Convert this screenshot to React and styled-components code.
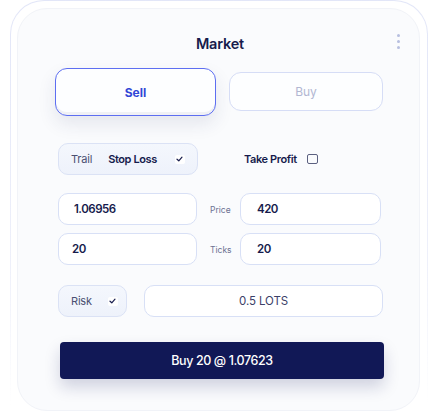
import React from 'react';
import styled, { createGlobalStyle, css } from 'styled-components';

const GlobalStyle = createGlobalStyle`
    html, body {
        margin: 0;
        padding: 0;
        background: #ffffff;
        font-family: Inter, "Open Sans", sans-serif;
        -webkit-font-smoothing: antialiased;
    }
`;

const navy = '#161b4c';

const Frame = styled.div`
    width: 418px;
    height: 440px;
    margin-left: 10px;
    box-sizing: border-box;
    padding: 7px 7px 0 6px;
    border-radius: 34px;
    border: 1px solid transparent;
    background:
        linear-gradient(#ffffff, #ffffff) padding-box,
        linear-gradient(180deg, #e2e6f8 0%, #eef0fa 60%, rgba(255,255,255,0) 92%) border-box;
`;

const Panel = styled.div`
    width: 403px;
    height: 403px;
    box-sizing: border-box;
    border-radius: 30px;
    background: #fafbfd;
    border: 1px solid #f1f3f8;
    padding: 25px 0 0;
`;

const Header = styled.header`
    display: grid;
    grid-template-columns: 1fr auto 1fr;
    align-items: center;
    height: 18px;
    padding-left: 3px;
`;

const Title = styled.h1`
    grid-column: 2;
    margin: 0;
    font-size: 14.5px;
    font-weight: 600;
    color: ${navy};
    letter-spacing: -0.2px;
`;

const Kebab = styled.div`
    grid-column: 3;
    justify-self: end;
    display: flex;
    flex-direction: column;
    gap: 3px;
    margin: -4px 19px 0 0;
    span {
        width: 3px;
        height: 3px;
        border-radius: 50%;
        background: #b7bfe0;
    }
`;

const Body = styled.div`
    padding: 0 36px 0 40px;
`;

const SideRow = styled.div`
    display: flex;
    align-items: center;
    gap: 13px;
    margin-top: 16px;
    margin-left: -3px;
`;

const SideButton = styled.button`
    font-family: inherit;
    font-size: 12px;
    border-radius: 12px;
    background: #fdfeff;
    cursor: pointer;
    ${props => props.active ? css`
        width: 161px;
        height: 48px;
        border: 1.5px solid #5d6ef1;
        color: #3347d6;
        font-weight: 700;
        box-shadow: 0 8px 18px rgba(40, 50, 100, 0.10), inset 0 -3px 0 rgba(30, 40, 90, 0.06);
    ` : css`
        width: 154px;
        height: 39px;
        margin-top: -2px;
        border: 1px solid #d6ddf6;
        color: #b2b7d2;
        font-weight: 400;
    `}
`;

const ToggleRow = styled.div`
    display: flex;
    align-items: center;
    gap: 46px;
    margin-top: 27px;
`;

const Pill = styled.div`
    display: flex;
    align-items: center;
    height: 32px;
    box-sizing: border-box;
    padding: 0 0 0 12px;
    width: ${props => props.width}px;
    border-radius: 10px;
    border: 1px solid #dbe2f5;
    background: linear-gradient(180deg, #f4f7fd 0%, #eef2fb 100%);
    font-size: 11px;
    letter-spacing: -0.2px;
    color: #4b5072;
`;

const Strong = styled.span`
    font-weight: 600;
    color: ${navy};
    letter-spacing: -0.4px;
    margin-left: ${props => props.gap || 0}px;
`;

const Check = styled.span`
    display: inline-flex;
    align-items: center;
    justify-content: center;
    width: 10px;
    height: 9px;
    background: #ffffff;
    border-radius: 2px;
    margin-left: ${props => props.gap}px;
`;

const Plain = styled.span``;

const TakeProfit = styled.label`
    display: flex;
    align-items: center;
    gap: 10px;
    font-size: 11px;
    font-weight: 600;
    letter-spacing: -0.4px;
    color: ${navy};
`;

const Box = styled.span`
    width: 9px;
    height: 8px;
    border: 1.3px solid #5b6080;
    border-radius: 2px;
`;

const Grid = styled.div`
    display: grid;
    grid-template-columns: 139px 43px 141px;
    row-gap: 8px;
    margin-top: 18px;
    align-items: center;
`;

const Field = styled.div`
    display: flex;
    align-items: center;
    justify-content: ${props => props.center ? 'center' : 'flex-start'};
    height: 32px;
    box-sizing: border-box;
    padding-left: ${props => props.center ? 0 : props.inset || 16}px;
    border-radius: 10px;
    border: 1px solid #d8e0f6;
    background: #ffffff;
    font-size: 11.5px;
    letter-spacing: ${props => props.center ? '-0.1px' : '-0.5px'};
    font-weight: ${props => props.center ? 400 : 600};
    color: ${props => props.center ? '#3b4068' : navy};
`;

const Label = styled.span`
    font-size: 8.5px;
    color: #6c7192;
    padding-left: 13px;
    padding-top: 2px;
`;

const RiskRow = styled.div`
    display: grid;
    grid-template-columns: 69px 239px;
    gap: 17px;
    margin-top: 20px;
`;

const Submit = styled.button`
    display: block;
    width: 324px;
    height: 37px;
    margin: 25px 0 0 2px;
    border: none;
    border-radius: 4px;
    background: #111856;
    color: #ffffff;
    font-family: inherit;
    font-size: 12.5px;
    font-weight: 500;
    letter-spacing: -0.4px;
    box-shadow: 0 8px 16px rgba(17, 24, 86, 0.18);
`;

const Tick = () => (
    <svg width="7" height="6" viewBox="0 0 7 6">
        <path d="M1 3.2 L2.8 4.8 L6 1.2" fill="none" stroke={navy} strokeWidth="1.2" strokeLinecap="round" strokeLinejoin="round" />
    </svg>
);

export default function App() {
    return (
        <>
            <GlobalStyle />
            <Frame>
                <Panel>
                    <Header>
                        <Title>Market</Title>
                        <Kebab><span /><span /><span /></Kebab>
                    </Header>
                    <Body>
                        <SideRow>
                            <SideButton active>Sell</SideButton>
                            <SideButton>Buy</SideButton>
                        </SideRow>
                        <ToggleRow>
                            <Pill width={140}>
                                <Plain>Trail</Plain>
                                <Strong gap={16}>Stop Loss</Strong>
                                <Check gap={18}><Tick /></Check>
                            </Pill>
                            <TakeProfit>Take Profit <Box /></TakeProfit>
                        </ToggleRow>
                        <Grid>
                            <Field inset={15}>1.06956</Field>
                            <Label>Price</Label>
                            <Field>420</Field>
                            <Field inset={13}>20</Field>
                            <Label>Ticks</Label>
                            <Field>20</Field>
                        </Grid>
                        <RiskRow>
                            <Pill width={69}>
                                <Plain>Risk</Plain>
                                <Check gap={16}><Tick /></Check>
                            </Pill>
                            <Field center>0.5 LOTS</Field>
                        </RiskRow>
                        <Submit>Buy 20 @ 1.07623</Submit>
                    </Body>
                </Panel>
            </Frame>
        </>
    );
}
